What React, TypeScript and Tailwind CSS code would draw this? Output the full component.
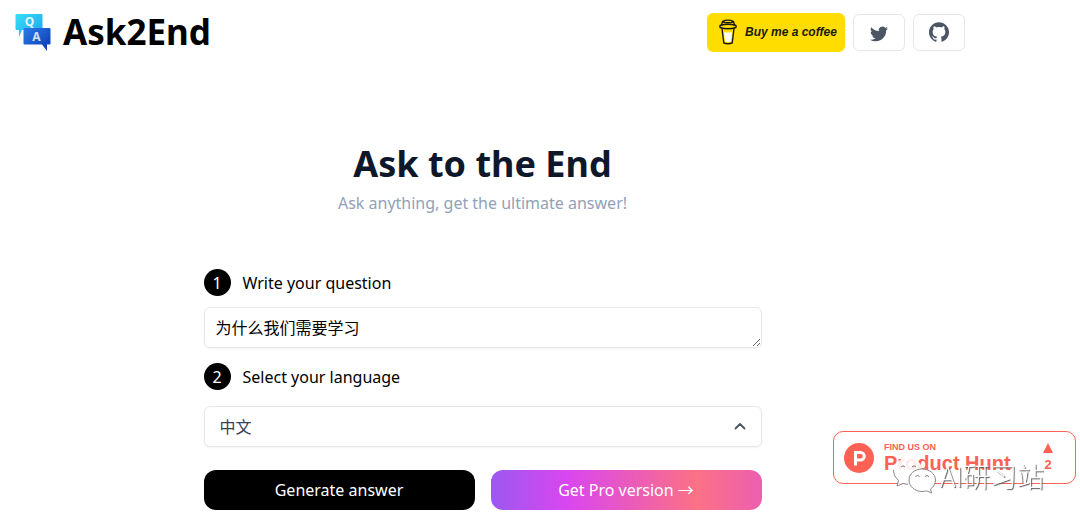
import type { ReactNode } from "react"

const languages = ["中文", "English", "日本語", "한국어", "Español"]

function Logo() {
  return (
    <svg viewBox="0 0 36 38" className="h-[38px] w-9" aria-hidden="true">
      <defs>
        <linearGradient id="bubbleQ" x1="0" y1="0" x2="1" y2="1">
          <stop offset="0" stopColor="#35e0f6" />
          <stop offset="1" stopColor="#1fa2f2" />
        </linearGradient>
        <linearGradient id="bubbleA" x1="0" y1="0" x2="1" y2="1">
          <stop offset="0" stopColor="#2b7de8" />
          <stop offset="1" stopColor="#0b35b0" />
        </linearGradient>
      </defs>
      <path d="M1.500 1h25a1 1 0 0 1 1 1v14a1 1 0 0 1-1 1H7L4 24V17H1.500a1 1 0 0 1-1-1V2a1 1 0 0 1 1-1z" fill="url(#bubbleQ)" />
      <path d="M9.500 15h25a1 1 0 0 1 1 1v14.500a1 1 0 0 1-1 1H32V38L27 31.500H9.500a1 1 0 0 1-1-1V16a1 1 0 0 1 1-1z" fill="url(#bubbleA)" />
      <text x="14.500" y="13" textAnchor="middle" fontSize="12" fontWeight="700" fontFamily="Noto Sans" fill="#e5f4ff">Q</text>
      <text x="21.500" y="28" textAnchor="middle" fontSize="12" fontWeight="700" fontFamily="Noto Sans" fill="#d5dff5">A</text>
    </svg>
  )
}

function CoffeeCup() {
  return (
    <svg viewBox="0 0 18 26" className="h-[26px] w-[18px]" fill="none" stroke="#1c1a10" strokeWidth="1.4" strokeLinejoin="round" strokeLinecap="round" aria-hidden="true">
      <path d="M5 13l1 9.500q3 .8 6 0L13 13q-4 1-8 0z" fill="#fff" stroke="none" />
      <path d="M3 9.500L4.800 24q4 1.500 8.400 0L15 9.500" />
      <path d="M1 6.500Q9 4 17 6.500V8.500Q9 11 1 8.500z" />
      <path d="M2.500 5.800L3.600 2.500Q9-.2 14.400 2.500L15.500 5.800M3.600 2.800Q9 4.600 14.400 2.800" />
    </svg>
  )
}

function TwitterIcon() {
  return (
    <svg viewBox="0 0 24 24" className="mt-[3px] size-[18px]" fill="#4b5563" aria-hidden="true">
      <path d="M23.953 4.570a10 10 0 0 1-2.825.775 4.958 4.958 0 0 0 2.163-2.723c-.951.555-2.005.959-3.127 1.184a4.920 4.920 0 0 0-8.384 4.482C7.690 8.095 4.067 6.130 1.640 3.162a4.822 4.822 0 0 0-.666 2.475c0 1.710.870 3.213 2.188 4.096a4.904 4.904 0 0 1-2.228-.616v.060a4.923 4.923 0 0 0 3.946 4.827 4.996 4.996 0 0 1-2.212.085 4.936 4.936 0 0 0 4.604 3.417 9.867 9.867 0 0 1-6.102 2.105c-.390 0-.779-.023-1.170-.067a13.995 13.995 0 0 0 7.557 2.209c9.053 0 13.998-7.496 13.998-13.985 0-.210 0-.420-.015-.630A9.935 9.935 0 0 0 24 4.590z" />
    </svg>
  )
}

function GithubIcon() {
  return (
    <svg viewBox="0 0 24 24" className="size-5" fill="#4b5563" aria-hidden="true">
      <path d="M12 .297c-6.630 0-12 5.373-12 12 0 5.303 3.438 9.800 8.205 11.385.600.113.820-.258.820-.577 0-.285-.010-1.040-.015-2.040-3.338.724-4.042-1.610-4.042-1.610C4.422 18.070 3.633 17.700 3.633 17.700c-1.087-.744.084-.729.084-.729 1.205.084 1.838 1.236 1.838 1.236 1.070 1.835 2.809 1.305 3.495.998.108-.776.417-1.305.760-1.605-2.665-.300-5.466-1.332-5.466-5.930 0-1.310.465-2.380 1.235-3.220-.135-.303-.540-1.523.105-3.176 0 0 1.005-.322 3.300 1.230.960-.267 1.980-.399 3-.405 1.020.006 2.040.138 3 .405 2.280-1.552 3.285-1.230 3.285-1.230.645 1.653.240 2.873.120 3.176.765.840 1.230 1.910 1.230 3.220 0 4.610-2.805 5.625-5.475 5.920.420.360.810 1.096.810 2.220 0 1.606-.015 2.896-.015 3.286 0 .315.210.690.825.570C20.565 22.092 24 17.592 24 12.297c0-6.627-5.373-12-12-12" />
    </svg>
  )
}

function Step({ number, htmlFor, children }: { number: number; htmlFor: string; children: ReactNode }) {
  return (
    <div className="flex items-center gap-3">
      <span className="flex size-[27px] items-center justify-center rounded-full bg-black text-white">{number}</span>
      <label htmlFor={htmlFor}>{children}</label>
    </div>
  )
}

function ProductHuntBadge() {
  return (
    <a
      href="#product-hunt"
      className="fixed right-1 bottom-[41px] flex h-[53px] w-[243px] items-center rounded-[10px] border border-[#ff6154] bg-white pr-[22px] pl-[10px] font-['Liberation_Sans',sans-serif] font-bold text-[#ff6154]"
    >
      <svg viewBox="0 0 30 30" className="size-[30px]" aria-hidden="true">
        <circle cx="15" cy="15" r="15" fill="#ff6154" />
        <path d="M11.500 22.500V9.500h5a3.800 3.800 0 0 1 0 7.600h-5" fill="none" stroke="#fff" strokeWidth="3" />
      </svg>
      <span className="ml-[10px] flex flex-col pb-[2px]">
        <span className="text-[9px] leading-3">FIND US ON</span>
        <span className="text-xl leading-5">Product Hunt</span>
      </span>
      <span className="ml-auto flex flex-col items-center gap-1">
        <svg viewBox="0 0 10 10" className="size-[10px]" fill="#ff6154" aria-hidden="true">
          <path d="M5 0l5 10H0z" />
        </svg>
        <span className="text-[13px] leading-4">2</span>
      </span>
    </a>
  )
}

function Watermark() {
  return (
    <div className="pointer-events-none fixed right-9 bottom-[31px] flex items-center gap-1">
      <svg viewBox="0 0 44 37" className="h-[37px] w-11" strokeLinejoin="round" aria-hidden="true">
        <path d="M16 1C8 1 1.500 6.500 1.500 14c0 4 2 7.500 5 9.800L5 29l6-2.500c2 .6 3.500.8 5 .8 8.500 0 14.500-6 14.500-13.300S24.500 1 16 1z" fill="#fff" fillOpacity=".88" />
        <path d="M1.500 13c0 4.500 2 8 5 10.300L5 29l6-2.500c2 .6 3.500.8 5 .8" fill="none" stroke="#888" strokeWidth="1" />
        <path d="M30 12c-7.500 0-13 5-13 11s5.500 11.500 13 11.500c1.600 0 3.200-.2 4.600-.7l4.900 2.200-1-4c3-2 5-5.400 5-9 0-6-6-11-13.500-11z" fill="#fff" stroke="#888" strokeWidth="1" />
        <path d="M9 10q2-2.500 4 0M20 10q2-2.500 4 0M23.500 19.500q2-2 4 0M33 19.500q2-2 4 0" fill="none" stroke="#777" strokeWidth="1" />
      </svg>
      <span className="font-['Noto_Sans_CJK_SC',sans-serif] text-[27px] leading-8 font-light text-white [text-shadow:1px_1px_1px_#555]">
        AI研习站
      </span>
    </div>
  )
}

export default function App() {
  return (
    <div className="min-h-screen bg-white pr-[115px] font-['Noto_Sans','Noto_Sans_CJK_SC',sans-serif] text-base text-black">
      <header className="flex items-center justify-between pt-3 pl-[15px]">
        <a href="#home" className="flex items-center gap-3">
          <Logo />
          <span className="text-[35px] leading-10 font-bold">Ask2End</span>
        </a>
        <nav className="flex items-center gap-2">
          <a href="#coffee" className="flex h-[39px] w-[138px] items-center gap-2 rounded-md bg-[#ffdd00] pl-3 text-[#1c1a10]">
            <CoffeeCup />
            <span className="font-['Liberation_Sans',cursive] text-xs font-bold whitespace-nowrap italic">Buy me a coffee</span>
          </a>
          <a href="#twitter" aria-label="Twitter" className="flex h-[37px] w-[52px] items-center justify-center rounded-md border border-gray-200">
            <TwitterIcon />
          </a>
          <a href="#github" aria-label="GitHub" className="flex h-[37px] w-[52px] items-center justify-center rounded-md border border-gray-200">
            <GithubIcon />
          </a>
        </nav>
      </header>

      <main className="mx-auto w-full max-w-[558px] pt-[88px]">
        <div className="text-center">
          <h1 className="text-4xl leading-[48px] font-bold text-slate-900">Ask to the End</h1>
          <p className="mt-[3px] text-slate-400">Ask anything, get the ultimate answer!</p>
        </div>

        <form className="mt-[54px]" onSubmit={(e) => e.preventDefault()}>
          <Step number={1} htmlFor="question">Write your question</Step>
          <textarea
            id="question"
            rows={1}
            defaultValue="为什么我们需要学习"
            className="mt-[11px] block h-[41px] w-full overflow-hidden rounded-md border border-gray-200 px-[11px] py-2 text-black shadow-xs"
          />
          <div className="mt-[15px]">
            <Step number={2} htmlFor="language">Select your language</Step>
          </div>
          <div className="relative mt-4">
            <select
              id="language"
              className="block h-[41px] w-full appearance-none rounded-md border border-gray-200 bg-white px-[15px] text-gray-700 shadow-xs"
            >
              {languages.map((language) => (
                <option key={language}>{language}</option>
              ))}
            </select>
            <svg viewBox="0 0 20 20" className="pointer-events-none absolute top-[10px] right-3 size-5" fill="none" stroke="#4b5563" strokeWidth="1.8" strokeLinecap="round" strokeLinejoin="round" aria-hidden="true">
              <path d="M5.500 12.500L10 8l4.500 4.500" />
            </svg>
          </div>
          <div className="mt-[23px] grid grid-cols-2 gap-4 text-white">
            <button type="submit" className="h-10 rounded-xl bg-black">Generate answer</button>
            <button
              type="button"
              className="h-10 rounded-xl bg-[linear-gradient(90deg,#9b59f0_0%,#d946ef_28%,#fb7185_76%,#ec5fb0_100%)]"
            >
              Get Pro version →
            </button>
          </div>
        </form>
      </main>

      <ProductHuntBadge />
      <Watermark />
    </div>
  )
}
